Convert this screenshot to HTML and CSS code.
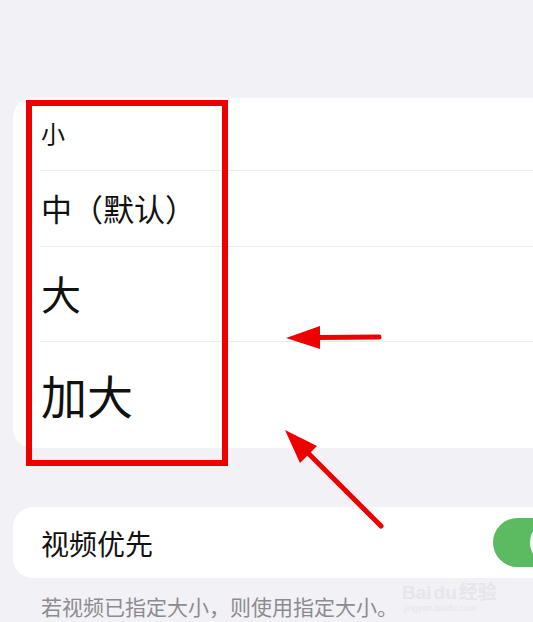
FILE: index.html
```html
<!DOCTYPE html>
<html lang="zh-CN">

<head>
    <meta charset="UTF-8">
    <meta name="viewport" content="width=device-width, initial-scale=1.0">
    <title>字体大小</title>
    <link rel="stylesheet" href="styles.css">
</head>

<body>
    <div class="page">
        <div class="card size-list">
            <div class="row row-s"><span>小</span></div>
            <div class="row row-m"><span>中（默认）</span></div>
            <div class="row row-l"><span>大</span></div>
            <div class="row row-xl"><span>加大</span></div>
        </div>

        <div class="card toggle-card">
            <span class="toggle-label">视频优先</span>
            <div class="switch"><div class="knob"></div></div>
        </div>
        <p class="caption">若视频已指定大小，则使用指定大小。</p>
    </div>

    <!-- annotations -->
    <div class="mark-box"></div>
    <svg class="arrows" width="533" height="622" viewBox="0 0 533 622">
        <line x1="379" y1="337" x2="316" y2="337.5" stroke="#ee0000" stroke-width="5" stroke-linecap="round" />
        <polygon points="286,338 320,326 320,349" fill="#ee0000" />
        <line x1="381" y1="526" x2="305" y2="450" stroke="#ee0000" stroke-width="5" stroke-linecap="round" />
        <polygon points="285,430 317,446 300,463" fill="#ee0000" />
    </svg>
    <div class="watermark">
        <div class="wm-main">Bai<span class="wm-du">du</span>经验</div>
        <div class="wm-sub">jingyan.baidu.com</div>
    </div>
</body>

</html>
```

FILE: styles.css
```css
body {
    margin: 0;
    background-color: #f1f1f6;
    font-family: "Noto Sans CJK SC", "Noto Sans", sans-serif;
    color: #111111;
    width: 533px;
    height: 622px;
    overflow: hidden;
    position: relative;
}

.page {
    padding: 98px 0 0 13px;
}

.card {
    background-color: #ffffff;
    border-radius: 20px 0 0 20px;
}

.size-list {
    display: flex;
    flex-direction: column;
}

.row {
    display: flex;
    align-items: center;
    margin-left: 27px;
    line-height: 1;
    border-bottom: 1px solid #ececf0;
}

.row span {
    margin-left: 1px;
    margin-top: -3px;
}

.row:last-child {
    border-bottom: none;
}

.row-s {
    height: 72px;
    font-size: 24px;
}

.row-m {
    height: 75px;
    font-size: 31px;
}

.row-l {
    height: 94px;
    font-size: 40px;
}

.row-xl {
    height: 106px;
    font-size: 46px;
}

.toggle-card {
    margin-top: 59px;
    height: 71px;
    display: flex;
    align-items: center;
    padding-left: 28px;
}

.toggle-label {
    font-size: 28px;
    line-height: 1;
    flex: 1;
}

/* only the left half of the switch is on screen */
.switch {
    width: 40px;
    height: 49px;
    border-radius: 25px 0 0 25px;
    background-color: #5cbb60;
    display: flex;
    align-items: center;
    overflow: hidden;
}

.knob {
    flex-shrink: 0;
    width: 43px;
    height: 43px;
    border-radius: 50%;
    background-color: #ffffff;
    margin-left: 37px;
}

.caption {
    margin: 16px 0 0 28px;
    font-size: 21px;
    line-height: 24px;
    color: #8c8c90;
}

.mark-box {
    position: absolute;
    left: 26px;
    top: 100px;
    width: 190px;
    height: 354px;
    border: 6px solid #ee0000;
}

.arrows {
    position: absolute;
    left: 0;
    top: 0;
}

.watermark {
    position: absolute;
    left: 402px;
    top: 583px;
    color: #e6e6ea;
    font-family: "Liberation Sans", "Noto Sans CJK SC", sans-serif;
}

.wm-main {
    font-size: 19px;
    font-weight: bold;
    line-height: 20px;
}

.wm-du {
    margin: 0 2px;
}

.wm-sub {
    font-size: 9px;
    line-height: 11px;
    margin-left: 2px;
}
```
